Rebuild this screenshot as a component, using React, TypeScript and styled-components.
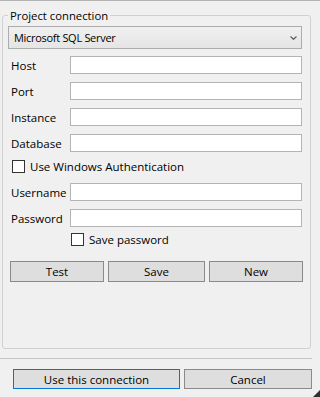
import styled, { createGlobalStyle } from "styled-components";

const GlobalStyle = createGlobalStyle`
  html, body {
    margin: 0;
    padding: 0;
    background: #f0f0f0;
  }

  body {
    font-family: "Open Sans", "Noto Sans", sans-serif;
    font-size: 11px;
    color: #000;
  }
`;

const fields = ["Host", "Port", "Instance", "Database"];

function App() {
  return (
    <Window>
      <GlobalStyle />

      <GroupBox>
        <Legend>Project connection</Legend>

        <Combo>
          <span>Microsoft SQL Server</span>
          <svg width="7" height="4" viewBox="0 0 7 4">
            <path d="M0.5 0.5 L3.5 3.3 L6.5 0.5" fill="none" stroke="#606060" strokeWidth="1.2" />
          </svg>
        </Combo>

        <FieldGrid>
          {fields.map((name) => (
            <FieldRow key={name}>
              <Label>{name}</Label>
              <TextBox type="text" />
            </FieldRow>
          ))}
        </FieldGrid>

        <CheckRow $indent={4} $top={8}>
          <CheckBox type="checkbox" />
          <span>Use Windows Authentication</span>
        </CheckRow>

        <FieldGrid $top={10}>
          <FieldRow>
            <Label>Username</Label>
            <TextBox type="text" />
          </FieldRow>
          <FieldRow>
            <Label>Password</Label>
            <TextBox type="password" />
          </FieldRow>
        </FieldGrid>

        <CheckRow $indent={63} $top={6}>
          <CheckBox type="checkbox" />
          <span>Save password</span>
        </CheckRow>

        <ActionRow>
          <Button type="button">Test</Button>
          <Button type="button">Save</Button>
          <Button type="button">New</Button>
        </ActionRow>
      </GroupBox>

      <Separator />

      <Footer>
        <Button type="button" $focused $width={167}>
          Use this connection
        </Button>
        <Button type="button" $width={128}>
          Cancel
        </Button>
      </Footer>

      <Grip width="7" height="7" viewBox="0 0 7 7">
        <path d="M7 0 L7 7 L0 7 Z" fill="#303030" />
      </Grip>
    </Window>
  );
}

const Window = styled.div`
  position: relative;
  width: 320px;
  height: 397px;
  box-sizing: border-box;
  border-top: 1px solid #b4b4b4;
  overflow: hidden;
`;

const GroupBox = styled.fieldset`
  box-sizing: border-box;
  margin: 7px 0 0 2px;
  width: 309px;
  height: 341px;
  padding: 3px 8px 0 5px;
  border: 1px solid #d0d0d0;
  border-radius: 3px;
  min-width: 0;
`;

const Legend = styled.legend`
  margin-left: 0;
  padding: 0 2px;
  line-height: 15px;
  font-size: 11.3px;
`;

const Combo = styled.div`
  box-sizing: border-box;
  height: 23px;
  display: flex;
  align-items: center;
  justify-content: space-between;
  padding: 0 4px 0 5px;
  border: 1px solid #acacac;
  background: linear-gradient(#f0f0f0, #e5e5e5);
  font-size: 11px;
  letter-spacing: -0.3px;

  svg {
    margin-top: 1px;
  }
`;

const FieldGrid = styled.div<{ $top?: number }>`
  display: grid;
  row-gap: 8px;
  margin-top: ${(p) => p.$top ?? 7}px;
`;

const FieldRow = styled.div`
  display: grid;
  grid-template-columns: 62px 1fr;
  align-items: center;
  height: 18px;
`;

const Label = styled.span`
  padding-left: 3px;
  font-size: 11.5px;
`;

const TextBox = styled.input`
  box-sizing: border-box;
  height: 18px;
  width: 100%;
  margin: 0;
  border: 1px solid #b4b4b4;
  background: #fff;
  outline: none;
`;

const CheckRow = styled.label<{ $indent: number; $top: number }>`
  display: flex;
  align-items: center;
  gap: 5px;
  height: 13px;
  margin: ${(p) => p.$top}px 0 0 ${(p) => p.$indent}px;
  font-size: 11.5px;
`;

const CheckBox = styled.input`
  appearance: none;
  box-sizing: border-box;
  width: 13px;
  height: 13px;
  margin: 0;
  border: 1px solid #333;
  background: #fff;
`;

const ActionRow = styled.div`
  display: grid;
  grid-template-columns: 94px 97px 94px;
  column-gap: 4px;
  margin: 15px 0 0 2px;

  & > button {
    height: 21px;
  }
`;

const Button = styled.button<{ $focused?: boolean; $width?: number }>`
  box-sizing: border-box;
  height: 20px;
  width: ${(p) => (p.$width ? `${p.$width}px` : "auto")};
  margin: 0;
  padding: 0;
  border: 1px solid ${(p) => (p.$focused ? "#0078d7" : "#8a8a8a")};
  background: #dedede;
  font-family: inherit;
  font-size: 11.5px;
  color: #000;
`;

const Separator = styled.hr`
  width: 312px;
  margin: 9px 0 0 0;
  border: none;
  border-top: 1px solid #c4c4c4;
`;

const Footer = styled.div`
  display: flex;
  gap: 4px;
  margin: 10px 0 0 13px;
`;

const Grip = styled.svg`
  position: absolute;
  right: 0;
  bottom: 0;
`;

export default App;
